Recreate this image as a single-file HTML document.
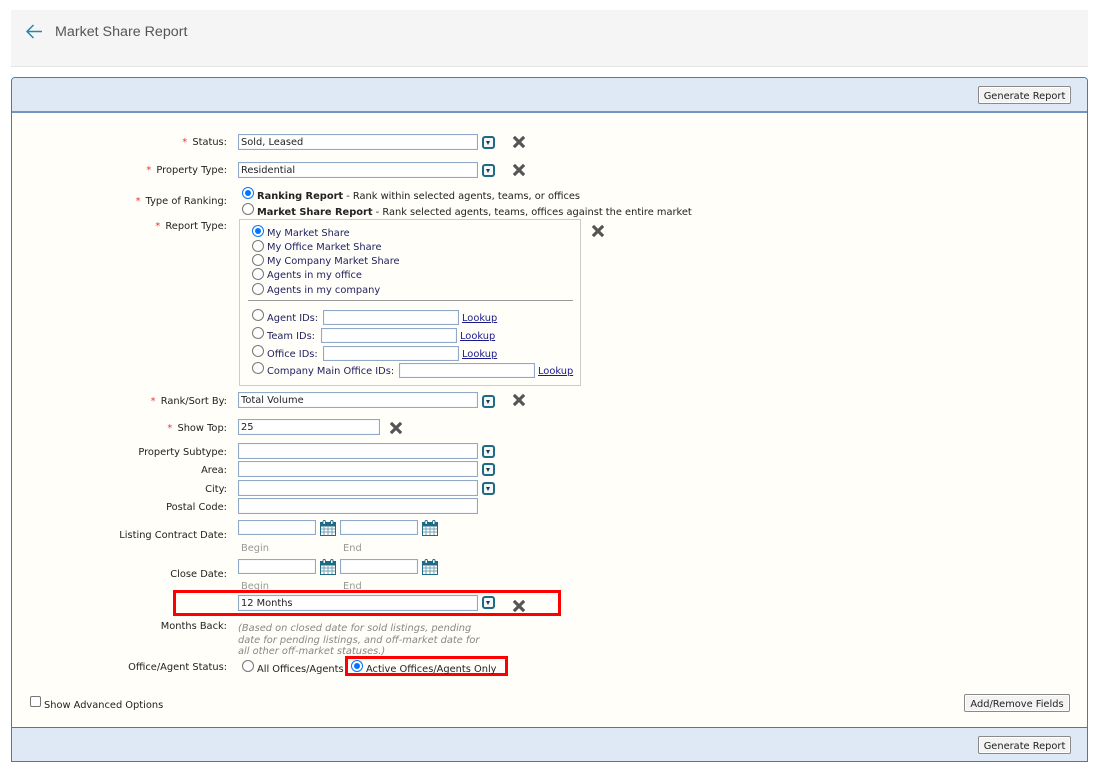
<!DOCTYPE html>
<html>
<head>
<meta charset="utf-8">
<style>
html,body{margin:0;padding:0;width:1100px;height:770px;overflow:hidden;background:#fff;}
*{box-sizing:border-box;}
body{position:relative;font-family:"DejaVu Sans",Verdana,sans-serif;font-size:9.84px;color:#222;}
.a{position:absolute;white-space:nowrap;line-height:12px;}
.l{position:absolute;white-space:nowrap;line-height:14px;right:873px;text-align:right;color:#222;}
.l b{color:#e33;font-weight:normal;margin-right:2px;}
.t{position:absolute;white-space:nowrap;line-height:14px;color:#222;}
.n{color:#1f1f60;}
.i{position:absolute;background:#fff;border:1px solid #8fa9c6;box-shadow:inset 0 0 1px #c5d3e2;height:16px;padding-left:2px;line-height:16px;font-size:9.84px;color:#222;white-space:nowrap;}
.r{position:absolute;width:12px;height:12px;border-radius:50%;border:1px solid #767676;background:#fff;}
.r.on{border:1.5px solid #0075ff;}
.r.on:after{content:"";position:absolute;left:1.5px;top:1.5px;width:6px;height:6px;border-radius:50%;background:#0075ff;}
.dd{position:absolute;width:13px;height:13px;border:2px solid #1f6a85;border-radius:3px;background:#f4f8fa;}
.dd:after{content:"";position:absolute;left:2px;top:2.5px;border-left:2.5px solid transparent;border-right:2.5px solid transparent;border-top:4px solid #1b3c4c;}
.x{position:absolute;width:12px;height:12px;}
.c{position:absolute;width:16px;height:16px;}
.btn{position:absolute;background:#f3f3f3;border:1px solid #8a8a8a;border-radius:2px;text-align:center;line-height:20px;height:18px;font-size:9.84px;color:#222;white-space:nowrap;box-shadow:inset 0 0 0 1px #fff;}
.lk{position:absolute;line-height:14px;color:#1a1a8c;text-decoration:underline;white-space:nowrap;}
.red{position:absolute;border:3px solid #f00;}
</style>
</head>
<body>
<svg width="0" height="0" style="position:absolute">
<defs>
<symbol id="x" viewBox="0 0 12 12"><path d="M2 2L10 10M10 2L2 10" stroke="#555" stroke-width="3.1" stroke-linecap="square" fill="none"/></symbol>
<symbol id="c" viewBox="0 0 16 16"><rect x="0.5" y="2.5" width="15" height="13" fill="#fff" stroke="#1f6a85"/><rect x="0.5" y="2.5" width="15" height="3.5" fill="#1f6a85" stroke="#1f6a85"/><path d="M4 7v8M8 7v8M12 7v8M1 9h14M1 12h14" stroke="#7aa3b5" stroke-width="1"/><rect x="3" y="0.5" width="2.4" height="4" rx="1" fill="#fff" stroke="#1f6a85" stroke-width=".9"/><rect x="10.6" y="0.5" width="2.4" height="4" rx="1" fill="#fff" stroke="#1f6a85" stroke-width=".9"/></symbol>
</defs>
</svg>

<div style="position:absolute;left:11px;top:10px;width:1077px;height:57px;background:#f5f5f5;border-bottom:1px solid #e4e4e4;"></div>
<svg style="position:absolute;left:25px;top:23px" width="18" height="17" viewBox="0 0 18 17"><path d="M17 8.5H2M8.5 2L2 8.5L8.5 15" fill="none" stroke="#2a86b0" stroke-width="1.5"/></svg>
<div class="a" style="left:55px;top:24px;font-family:'Liberation Sans',Arial,sans-serif;font-size:14.27px;line-height:17px;color:#555;">Market Share Report</div>

<div style="position:absolute;left:11px;top:77px;width:1077px;height:685px;background:#fffef8;border:1px solid #4a7aa8;border-radius:4px 4px 0 0;"></div>
<div style="position:absolute;left:12px;top:78px;width:1075px;height:35px;background:#dee9f5;border-bottom:2px solid #6f97bf;border-radius:3px 3px 0 0;"></div>
<div style="position:absolute;left:12px;top:727px;width:1075px;height:34px;background:#dee9f5;border-top:1px solid #4a7aa8;"></div>

<div class="btn" style="left:978px;top:86px;width:93px;">Generate Report</div>
<div class="btn" style="left:978px;top:736px;width:93px;">Generate Report</div>
<div class="btn" style="left:964px;top:694px;width:106px;">Add/Remove Fields</div>

<div class="l" style="top:136px;"><b>*</b> Status:</div>
<div class="i" style="left:238px;top:134px;width:240px;">Sold, Leased</div>
<div class="dd" style="left:482px;top:136px;"></div>
<svg class="x" style="left:513px;top:136px"><use href="#x"/></svg>

<div class="l" style="top:164px;"><b>*</b> Property Type:</div>
<div class="i" style="left:238px;top:162px;width:240px;">Residential</div>
<div class="dd" style="left:482px;top:164px;"></div>
<svg class="x" style="left:513px;top:164px"><use href="#x"/></svg>

<div class="l" style="top:195px;"><b>*</b> Type of Ranking:</div>
<div class="r on" style="left:242px;top:187px;"></div>
<div class="t" style="left:257px;top:190px;"><strong>Ranking Report</strong> - Rank within selected agents, teams, or offices</div>
<div class="r" style="left:242px;top:203px;"></div>
<div class="t" style="left:257px;top:206px;"><strong>Market Share Report</strong> - Rank selected agents, teams, offices against the entire market</div>

<div class="l" style="top:220px;"><b>*</b> Report Type:</div>
<div style="position:absolute;left:239px;top:219px;width:342px;height:167px;border:1px solid #ccc;"></div>
<svg class="x" style="left:592px;top:225px"><use href="#x"/></svg>

<div class="r on" style="left:252px;top:225px;"></div><div class="t n" style="left:267px;top:227px;">My Market Share</div>
<div class="r" style="left:252px;top:240px;"></div><div class="t n" style="left:267px;top:241px;">My Office Market Share</div>
<div class="r" style="left:252px;top:254px;"></div><div class="t n" style="left:267px;top:255px;">My Company Market Share</div>
<div class="r" style="left:252px;top:268px;"></div><div class="t n" style="left:267px;top:269px;">Agents in my office</div>
<div class="r" style="left:252px;top:283px;"></div><div class="t n" style="left:267px;top:284px;">Agents in my company</div>
<div style="position:absolute;left:248px;top:300px;width:325px;height:1px;background:#999;"></div>

<div class="r" style="left:252px;top:309px;"></div><div class="t n" style="left:267px;top:312px;">Agent IDs:</div>
<div class="i" style="left:323px;top:310px;width:136px;height:15px;"></div><div class="lk" style="left:462px;top:312px;">Lookup</div>
<div class="r" style="left:252px;top:327px;"></div><div class="t n" style="left:267px;top:330px;">Team IDs:</div>
<div class="i" style="left:321px;top:328px;width:136px;height:15px;"></div><div class="lk" style="left:460px;top:330px;">Lookup</div>
<div class="r" style="left:252px;top:345px;"></div><div class="t n" style="left:267px;top:348px;">Office IDs:</div>
<div class="i" style="left:323px;top:346px;width:136px;height:15px;"></div><div class="lk" style="left:462px;top:348px;">Lookup</div>
<div class="r" style="left:252px;top:362px;"></div><div class="t n" style="left:267px;top:365px;">Company Main Office IDs:</div>
<div class="i" style="left:399px;top:363px;width:136px;height:15px;"></div><div class="lk" style="left:538px;top:365px;">Lookup</div>

<div class="l" style="top:395px;"><b>*</b> Rank/Sort By:</div>
<div class="i" style="left:238px;top:392px;width:240px;">Total Volume</div>
<div class="dd" style="left:482px;top:395px;"></div>
<svg class="x" style="left:513px;top:394px"><use href="#x"/></svg>

<div class="l" style="top:422px;"><b>*</b> Show Top:</div>
<div class="i" style="left:238px;top:419px;width:142px;">25</div>
<svg class="x" style="left:390px;top:422px"><use href="#x"/></svg>

<div class="l" style="top:446px;">Property Subtype:</div>
<div class="i" style="left:238px;top:443px;width:240px;"></div>
<div class="dd" style="left:482px;top:445px;"></div>
<div class="l" style="top:464px;">Area:</div>
<div class="i" style="left:238px;top:461px;width:240px;"></div>
<div class="dd" style="left:482px;top:463px;"></div>
<div class="l" style="top:483px;">City:</div>
<div class="i" style="left:238px;top:480px;width:240px;"></div>
<div class="dd" style="left:482px;top:482px;"></div>
<div class="l" style="top:501px;">Postal Code:</div>
<div class="i" style="left:238px;top:498px;width:240px;"></div>

<div class="l" style="top:529px;">Listing Contract Date:</div>
<div class="i" style="left:238px;top:520px;width:78px;height:15px;"></div>
<svg class="c" style="left:320px;top:520px"><use href="#c"/></svg>
<div class="i" style="left:340px;top:520px;width:78px;height:15px;"></div>
<svg class="c" style="left:422px;top:520px"><use href="#c"/></svg>
<div class="t" style="left:241px;top:542px;color:#999;">Begin</div>
<div class="t" style="left:343px;top:542px;color:#999;">End</div>

<div class="l" style="top:568px;">Close Date:</div>
<div class="i" style="left:238px;top:559px;width:78px;height:15px;"></div>
<svg class="c" style="left:320px;top:559px"><use href="#c"/></svg>
<div class="i" style="left:340px;top:559px;width:78px;height:15px;"></div>
<svg class="c" style="left:422px;top:559px"><use href="#c"/></svg>
<div class="t" style="left:241px;top:580px;color:#999;">Begin</div>
<div class="t" style="left:343px;top:580px;color:#999;">End</div>

<div class="red" style="left:173px;top:590px;width:388px;height:26px;"></div>
<div class="i" style="left:238px;top:595px;width:240px;">12 Months</div>
<div class="dd" style="left:482px;top:596px;"></div>
<svg class="x" style="left:513px;top:600px"><use href="#x"/></svg>

<div class="l" style="top:620px;">Months Back:</div>
<div class="t" style="left:238px;top:622px;color:#888;font-style:italic;">(Based on closed date for sold listings, pending</div>
<div class="t" style="left:238px;top:634px;color:#888;font-style:italic;">date for pending listings, and off-market date for</div>
<div class="t" style="left:238px;top:645px;color:#888;font-style:italic;">all other off-market statuses.)</div>

<div class="l" style="top:661px;">Office/Agent Status:</div>
<div class="r" style="left:242px;top:660px;"></div>
<div class="t" style="left:257px;top:663px;">All Offices/Agents</div>
<div class="red" style="left:345px;top:656px;width:163px;height:20px;"></div>
<div class="r on" style="left:351px;top:660px;"></div>
<div class="t" style="left:366px;top:663px;">Active Offices/Agents Only</div>

<div style="position:absolute;left:30px;top:696px;width:11px;height:11px;border:1px solid #767676;border-radius:2px;background:#fff;"></div>
<div class="t" style="left:44px;top:699px;">Show Advanced Options</div>
</body>
</html>
